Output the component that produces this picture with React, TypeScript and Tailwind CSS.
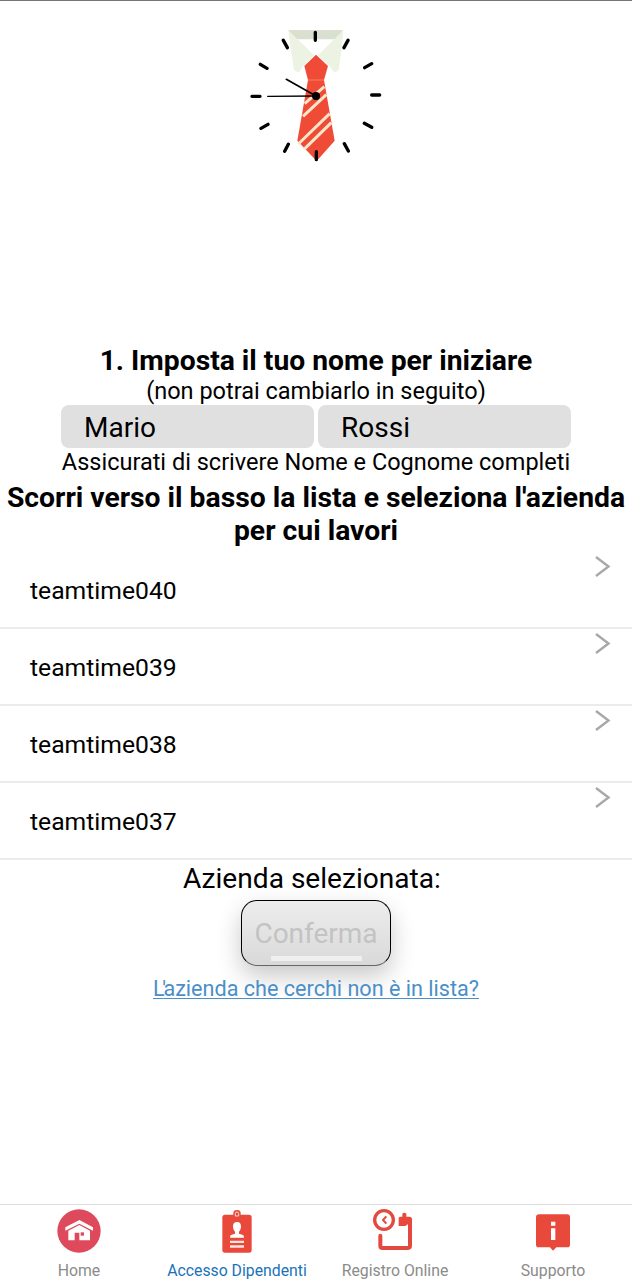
import React from "react";

const companies = ["teamtime040", "teamtime039", "teamtime038", "teamtime037"];

function Logo() {
  return (
    <svg viewBox="0 0 450 450" className="size-[150px]">
      <path d="M145 30H308L292 58H160Z" fill="#d9e0cf" />
      <path d="M145 31L222 106L189 138L176 158L162 150Q152 90 145 31Z" fill="#ecf3e2" />
      <path d="M310 31L234 106L268 138L284 158L296 150Q306 90 310 31Z" fill="#ecf3e2" />
      <path d="M228 104L264 138L252 180L284 362L230 423L172 362L204 180L193 138Z" fill="#f04b37" />
      <path d="M204 180H252" stroke="#f36d4d" strokeWidth="5" />
      <g stroke="#fbe6c8" strokeWidth="9">
        <path d="M194 251L253 200M189 289L259 224M175 372L269 281M192 388L274 308" />
      </g>
      <g stroke="#000" strokeWidth="10" strokeLinecap="round">
        <path d="M226 37V61M130 61L142 83M324 61L312 83M61 133L81 145M395 131L374 143M36 229H60M395 225H419M63 325L84 313M373 310L395 322M145 373L134 394M313 371L325 393M229 395V419" />
      </g>
      <path d="M228 228L139 178" stroke="#000" strokeWidth="5" strokeLinecap="round" />
      <path d="M228 228L83 229" stroke="#000" strokeWidth="4" strokeLinecap="round" />
      <circle cx="228" cy="228" r="12" />
    </svg>
  );
}

function HomeIcon() {
  return (
    <svg viewBox="0 0 132 132" className="size-11">
      <circle cx="66" cy="66" r="65" fill="#de4a5c" />
      <path d="M25 55L67 33L108 55V65L67 44L25 65Z" fill="#fff" />
      <path d="M34 65L67 48L99 65V94H67V71H53V94H34Z" fill="#fff" />
      <rect x="71" y="70" width="10" height="10" fill="#de4a5c" />
    </svg>
  );
}

function BadgeIcon() {
  return (
    <svg viewBox="0 0 132 132" className="size-11">
      <path d="M55 20V13Q55 3 66 3T77 13V20" fill="#e8493b" />
      <rect x="22" y="17" width="88" height="114" rx="8" fill="#e8493b" />
      <path d="M61 21V14Q61 9 66 9T71 14V21Z" fill="#e8493b" stroke="#fbd8d3" strokeWidth="3" />
      <path d="M54 55Q53 39 66 39T78 55Q77 63 72 68V74L84 78Q87 80 87 86H45Q45 80 48 78L60 74V68Q55 63 54 55Z" fill="#fff" />
      <path d="M45 98.5H87M45 112.5H87" stroke="#fde4e0" strokeWidth="7" />
    </svg>
  );
}

function RegisterIcon() {
  return (
    <svg viewBox="0 0 132 132" className="size-11">
      <circle cx="33" cy="33" r="28" fill="none" stroke="#e2493f" strokeWidth="10" />
      <path d="M40 22L30 33L40 44" fill="none" stroke="#e2493f" strokeWidth="6" />
      <path d="M22 80V110Q22 117 29 117H102Q111 117 111 110V34" fill="none" stroke="#e2493f" strokeWidth="12" strokeLinecap="round" />
      <path d="M77 51V28Q77 23 82 23H88V14Q94 8 100 14V23H109Q117 23 117 31V51H107L104 46L97 51Z" fill="#e8493b" />
    </svg>
  );
}

function SupportIcon() {
  return (
    <svg viewBox="0 0 132 132" className="size-11">
      <path d="M24 16H108Q117 16 117 25V107Q117 115 109 115H76L66 125L57 115H24Q15 115 15 107V25Q15 16 24 16Z" fill="#e9493a" />
      <path d="M60 38H73V50H60ZM60 58H73V93H60Z" fill="#fff" />
    </svg>
  );
}

const tabs = [
  { label: "Home", icon: HomeIcon },
  { label: "Accesso Dipendenti", icon: BadgeIcon, active: true },
  { label: "Registro Online", icon: RegisterIcon },
  { label: "Supporto", icon: SupportIcon },
];

export default function App() {
  return (
    <div className="flex h-[1280px] w-[632px] flex-col overflow-hidden border-t border-[#727774] bg-white font-[Roboto,sans-serif] text-black">
      <header className="flex h-[343px] justify-center pt-[19px] pr-0.5">
        <Logo />
      </header>

      <main className="flex grow flex-col items-center whitespace-nowrap text-center">
        <h1 className="text-[28.25px] leading-[33px] font-bold">1. Imposta il tuo nome per iniziare</h1>
        <p className="text-[23.5px] leading-7">(non potrai cambiarlo in seguito)</p>
        <div className="flex gap-1">
          <input aria-label="Nome" defaultValue="Mario" className="h-[43px] w-[253px] rounded-lg bg-[#e0e0e0] pl-[23px] pt-0.5 text-[28px] outline-none" />
          <input aria-label="Cognome" defaultValue="Rossi" className="h-[43px] w-[253px] rounded-lg bg-[#e0e0e0] pl-[23px] pt-0.5 text-[28px] outline-none" />
        </div>
        <p className="text-[23.5px] leading-7">Assicurati di scrivere Nome e Cognome completi</p>
        <h2 className="mt-[5px] text-[28.3px] leading-[33px] font-bold">
          Scorri verso il basso la lista e seleziona l'azienda
          <br />
          per cui lavori
        </h2>

        <ul className="mt-[5px] w-full">
          {companies.map((name) => (
            <li key={name} className="flex h-[77px] justify-between border-b-2 border-[#ebebeb] pr-[21px] pl-[30px] text-left">
              <span className="pt-6 text-[24.7px] leading-[30px]">{name}</span>
              <svg viewBox="0 0 16 22" className="mt-[3px] h-[22px] w-4" fill="none" stroke="#a8a8a8" strokeWidth="2.4">
                <path d="M1 2L13.5 11.5L1 21" />
              </svg>
            </li>
          ))}
        </ul>

        <p className="mt-[3px] pr-2 text-[28.1px] leading-8">Azienda selezionata:</p>
        <button className="mt-[5px] flex h-[66px] w-[150px] flex-col items-center rounded-[16px] border border-black border-b-[#666] bg-linear-to-b from-[#ededed] to-[#d9d9d9] pt-[17px] text-[28px] leading-8 text-[#c3c3c3] shadow-[0_10px_24px_rgba(0,0,0,0.22)]">
          Conferma
          <span className="mt-1.5 h-[5px] w-[91px] bg-[#efefef]" />
        </button>
        <a href="#lista" className="z-10 mt-[10px] text-[21.6px] leading-[26px] text-[#4a8fc9] underline decoration-1 underline-offset-2">
          <span className="tracking-[-2.5px]">L'</span>azienda che cerchi non è in lista?
        </a>
      </main>

      <nav className="grid h-[76px] shrink-0 grid-cols-4 border-t border-[#dedede] bg-white">
        {tabs.map(({ label, icon: Icon, active }) => (
          <a key={label} href="#tab" className={active ? "flex flex-col items-center pt-1 whitespace-nowrap text-[#1a73b8]" : "flex flex-col items-center pt-1 whitespace-nowrap text-[#8b8b8b]"}>
            <Icon />
            <span className="mt-2 text-[15.8px] leading-5">{label}</span>
          </a>
        ))}
      </nav>
    </div>
  );
}
